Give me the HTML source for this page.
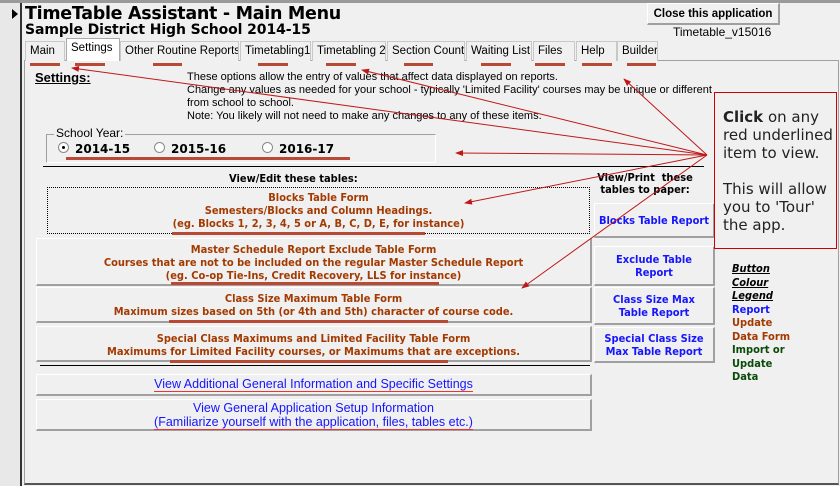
<!DOCTYPE html>
<html><head><meta charset="utf-8"><style>
*{margin:0;padding:0;box-sizing:border-box}
body{width:840px;height:486px;background:#f0f0f0;font-family:"DejaVu Sans","Liberation Sans",sans-serif;position:relative;overflow:hidden;color:#000}
.a{position:absolute;white-space:nowrap}
.btn{position:absolute;background:#f0f0f0;border:1px solid #fff;border-right:2px solid #a0a0a0;border-bottom:2px solid #a0a0a0;text-align:center;font-size:11px;font-weight:bold;white-space:nowrap;font-family:"DejaVu Sans Condensed","Liberation Sans Narrow",sans-serif}
.tab{position:absolute;top:41px;height:20px;border:1px solid #c8c8c8;border-bottom:none;background:#f0f0f0;font-size:11.5px;padding:3px 0 0 4px;font-family:"Liberation Sans",sans-serif;white-space:nowrap;overflow:hidden}
.ul{position:absolute;height:3px;background:#b84a35}
.br{color:#a33a00}.bl{color:#1515ff}
.ru{border-bottom:1px solid #e33}
</style></head><body>
<div class="a" style="left:0;top:0;width:22px;height:486px;background:#e8e8e8;border-right:2px solid #333"></div>
<div class="a" style="left:0;top:0;width:840px;height:3px;background:#9a9a9a"></div>
<div class="a" style="left:12px;top:9px;width:0;height:0;border-top:5px solid transparent;border-bottom:5px solid transparent;border-left:6px solid #000"></div>
<div class="a" style="left:25px;top:4px;font-size:17.5px;font-weight:bold;letter-spacing:-0.3px">TimeTable Assistant - Main Menu</div>
<div class="a" style="left:25px;top:22px;font-size:14px;font-weight:bold;letter-spacing:-0.1px">Sample District High School 2014-15</div>
<div class="btn" style="left:647px;top:3px;width:133px;height:22px;font-size:11.5px;padding-top:4px;font-family:'Liberation Sans',sans-serif">Close this application</div>
<div class="a" style="left:673px;top:25px;font-size:12px;font-family:'Liberation Sans',sans-serif">Timetable_v15016</div>
<div class="a" style="left:24px;top:60px;width:815px;height:425px;border:1px solid #a0a0a0;border-bottom:2px solid #555"></div>
<div class="tab" style="left:25px;width:40px">Main</div>
<div class="tab" style="left:66px;top:38px;height:23px;width:54px;background:#fff;border-color:#aaa">Settings</div>
<div class="tab" style="left:120px;width:119px">Other Routine Reports</div>
<div class="tab" style="left:240px;width:71px">Timetabling1</div>
<div class="tab" style="left:312px;width:74px">Timetabling 2</div>
<div class="tab" style="left:387px;width:78px">Section Count</div>
<div class="tab" style="left:466px;width:66px">Waiting List</div>
<div class="tab" style="left:533px;width:42px">Files</div>
<div class="tab" style="left:576px;width:41px">Help</div>
<div class="tab" style="left:617px;width:41px">Builder</div>
<div class="ul" style="left:30px;top:63px;width:30px"></div>
<div class="ul" style="left:75px;top:63px;width:30px"></div>
<div class="ul" style="left:153px;top:63px;width:29px"></div>
<div class="ul" style="left:258px;top:63px;width:30px"></div>
<div class="ul" style="left:326px;top:63px;width:30px"></div>
<div class="ul" style="left:404px;top:63px;width:29px"></div>
<div class="ul" style="left:481px;top:63px;width:30px"></div>
<div class="ul" style="left:535px;top:63px;width:30px"></div>
<div class="ul" style="left:582px;top:63px;width:30px"></div>
<div class="ul" style="left:627px;top:63px;width:29px"></div>
<div class="a" style="left:35px;top:70px;font-size:13px;font-weight:bold;text-decoration:underline;font-family:'Liberation Sans',sans-serif">Settings:</div>
<div class="a" style="left:187px;top:71px;font-size:11px;line-height:13px;font-family:'Liberation Sans',sans-serif">These options allow the entry of values that affect data displayed on reports.<br>Change any values as needed for your school - typically 'Limited Facility' courses may be unique or different<br>from school to school.<br>Note: You likely will not need to make any changes to any of these items.</div>
<div class="a" style="left:46px;top:134px;width:390px;height:29px;border:1px solid #a0a0a0;border-right-color:#fff;border-bottom-color:#fff"></div>
<div class="a" style="left:54px;top:126px;font-size:12px;background:#f0f0f0;padding:0 2px;font-family:'Liberation Sans',sans-serif">School Year:</div>
<div class="a" style="left:58px;top:142px;width:11px;height:11px;border-radius:50%;background:#fff;border:1px solid #888"><div style="position:absolute;left:3px;top:3px;width:3px;height:3px;background:#000;border-radius:50%"></div></div>
<div class="a" style="left:154px;top:142px;width:11px;height:11px;border-radius:50%;background:#fff;border:1px solid #888"></div>
<div class="a" style="left:262px;top:142px;width:11px;height:11px;border-radius:50%;background:#fff;border:1px solid #888"></div>
<div class="a" style="left:75px;top:142px;font-size:12px;font-weight:bold">2014-15</div>
<div class="a" style="left:171px;top:142px;font-size:12px;font-weight:bold">2015-16</div>
<div class="a" style="left:279px;top:142px;font-size:12px;font-weight:bold">2016-17</div>
<div class="ul" style="left:66px;top:157px;width:284px"></div>
<div class="a" style="left:43px;top:166px;width:661px;height:1px;background:#000"></div>
<div class="a" style="left:229px;top:172px;font-size:11px;font-weight:bold;font-family:'DejaVu Sans Condensed',sans-serif">View/Edit these tables:</div>
<div class="a" style="left:595px;top:172px;font-size:11px;font-weight:bold;text-align:center;line-height:12px;width:100px;font-family:'DejaVu Sans Condensed',sans-serif">View/Print&nbsp; these<br>tables to paper:</div>
<div class="btn br" style="left:47px;top:187px;width:543px;height:47px;padding-top:3px;line-height:13px;border:1px dotted #000">Blocks Table Form<br>Semesters/Blocks and Column Headings.<br>(eg. Blocks 1, 2, 3, 4, 5 or A, B, C, D, E, for instance)</div>
<div class="btn br" style="left:36px;top:238px;width:556px;height:48px;padding-top:4px;line-height:13px">Master Schedule Report Exclude Table Form<br>Courses that are not to be included on the regular Master Schedule Report<br>(eg. Co-op Tie-Ins, Credit Recovery, LLS for instance)</div>
<div class="btn br" style="left:36px;top:287px;width:556px;height:36px;padding-top:4px;line-height:13px">Class Size Maximum Table Form<br>Maximum sizes based on 5th (or 4th and 5th) character of course code.</div>
<div class="btn br" style="left:36px;top:326px;width:556px;height:36px;padding-top:5px;line-height:13px">Special Class Maximums and Limited Facility Table Form<br>Maximums for Limited Facility courses, or Maximums that are exceptions.</div>
<div class="ul" style="left:172px;top:232px;width:253px"></div>
<div class="ul" style="left:171px;top:282px;width:268px"></div>
<div class="ul" style="left:169px;top:320px;width:279px"></div>
<div class="ul" style="left:170px;top:360px;width:278px"></div>
<div class="btn bl" style="left:594px;top:203px;width:121px;height:35px;padding-top:10px">Blocks Table Report</div>
<div class="btn bl" style="left:594px;top:246px;width:121px;height:40px;padding-top:6px;line-height:13px">Exclude Table<br>Report</div>
<div class="btn bl" style="left:594px;top:287px;width:121px;height:38px;padding-top:5px;line-height:13px">Class Size Max<br>Table Report</div>
<div class="btn bl" style="left:594px;top:327px;width:121px;height:36px;padding-top:4px;line-height:13px">Special Class Size<br>Max Table Report</div>
<div class="a" style="left:40px;top:365px;width:550px;height:1px;background:#000"></div>
<div class="btn bl" style="left:36px;top:374px;width:556px;height:22px;padding-top:2px;font-weight:normal;font-size:12.5px;font-family:'Liberation Sans',sans-serif"><span class="ru">View Additional General Information and Specific Settings</span></div>
<div class="btn bl" style="left:36px;top:399px;width:556px;height:32px;padding-top:1px;line-height:14px;font-weight:normal;font-size:12.5px;font-family:'Liberation Sans',sans-serif">View General Application Setup Information<br><span class="ru">(Familiarize yourself with the application, files, tables etc.)</span></div>
<div class="a" style="left:714px;top:92px;width:123px;height:157px;border:1px solid #c00;background:#f0f0f0;padding:15px 0 0 8px;font-size:15px;line-height:18px;color:#222;white-space:normal"><b>Click</b> on any red underlined item to view.<br><br>This will allow you to 'Tour' the app.</div>
<div class="a" style="left:732px;top:262px;font-size:11px;font-weight:bold;line-height:13.5px;font-family:'DejaVu Sans Condensed',sans-serif">
<i style="text-decoration:underline">Button</i><br><i style="text-decoration:underline">Colour</i><br><i style="text-decoration:underline">Legend</i><br><span class="bl">Report</span><br><span class="br">Update<br>Data Form</span><br><span style="color:#0a4a0a">Import or<br>Update<br>Data</span></div>
<svg class="a" style="left:0;top:0" width="840" height="486">
<defs><marker id="m" markerWidth="8" markerHeight="6" refX="7" refY="3" orient="auto" markerUnits="userSpaceOnUse"><path d="M0,0 L8,3 L0,6z" fill="#c01818"/></marker></defs>
<g stroke="#c01818" stroke-width="1" fill="none">
<line x2="72" y2="68" x1="707" y1="155" marker-end="url(#m)"/>
<line x2="362" y2="70" x1="707" y1="155" marker-end="url(#m)"/>
<line x2="624" y2="79" x1="707" y1="155" marker-end="url(#m)"/>
<line x2="456" y2="153" x1="707" y1="155" marker-end="url(#m)"/>
<line x2="465" y2="203" x1="707" y1="155" marker-end="url(#m)"/>
<line x2="522" y2="288" x1="707" y1="155" marker-end="url(#m)"/>
</g></svg>
</body></html>
